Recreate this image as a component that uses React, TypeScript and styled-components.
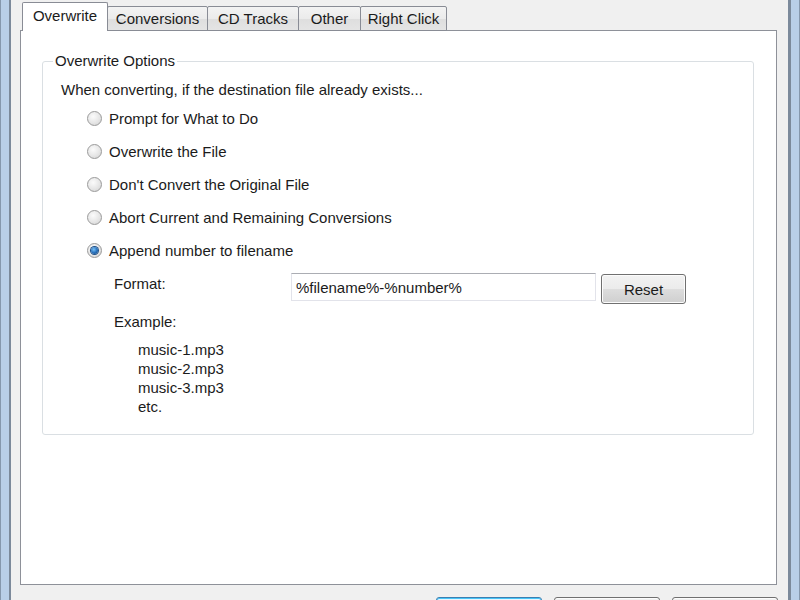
import React from "react";
import styled, { createGlobalStyle } from "styled-components";

const GlobalStyle = createGlobalStyle`
  html, body {
    margin: 0;
    padding: 0;
    overflow: hidden;
    background: #f0f0f0;
  }
  body {
    font-family: "Liberation Sans", Arial, sans-serif;
    font-size: 15px;
    color: #1b1b1b;
  }
`;

const tabs = [
  { label: "Overwrite", width: 86 },
  { label: "Conversions", width: 101 },
  { label: "CD Tracks", width: 92 },
  { label: "Other", width: 63 },
  { label: "Right Click", width: 87 },
];

const options = [
  "Prompt for What to Do",
  "Overwrite the File",
  "Don't Convert the Original File",
  "Abort Current and Remaining Conversions",
  "Append number to filename",
];

const examples = ["music-1.mp3", "music-2.mp3", "music-3.mp3", "etc."];

const App = () => {
  const active = 0;
  const checked = 4;

  return (
    <>
      <GlobalStyle />
      <Screen>
        <Frame side="left" />
        <Dialog>
          <TabStrip>
            {tabs.map((t, i) => (
              <Tab key={t.label} $active={i === active} $width={t.width}>
                {t.label}
              </Tab>
            ))}
          </TabStrip>
          <Panel>
            <Group>
              <Legend>Overwrite Options</Legend>
              <GroupBody>
                <Intro>When converting, if the destination file already exists...</Intro>
                <RadioList>
                  {options.map((o, i) => (
                    <RadioRow key={o}>
                      <Radio $checked={i === checked} />
                      <span>{o}</span>
                    </RadioRow>
                  ))}
                </RadioList>
                <FormatRow>
                  <FieldLabel>Format:</FieldLabel>
                  <TextBox>%filename%-%number%</TextBox>
                  <PushButton>Reset</PushButton>
                </FormatRow>
                <ExampleLabel>Example:</ExampleLabel>
                <ExampleList>
                  {examples.map((e) => (
                    <div key={e}>{e}</div>
                  ))}
                </ExampleList>
              </GroupBody>
            </Group>
          </Panel>
          {/* bottom buttons: only their top edges show in the picture */}
          <ButtonRow>
            <DialogButton $default />
            <DialogButton />
            <DialogButton />
          </ButtonRow>
        </Dialog>
        <Frame side="right" />
      </Screen>
    </>
  );
};

const Screen = styled.div`
  display: flex;
  width: 800px;
  height: 600px;
  overflow: hidden;
  background: #f0f0f0;
`;

const Frame = styled.div<{ side: "left" | "right" }>`
  width: ${(p) => (p.side === "left" ? "11px" : "12px")};
  flex-shrink: 0;
  box-sizing: border-box;
  background: #b9cfe8;
  ${(p) =>
    p.side === "left"
      ? `border-left: 1px solid #8698ad; border-right: 2px solid #7c8a9b;`
      : `border-left: 3px solid #7c8a9b; border-right: 1px solid #8698ad;`}
`;

const Dialog = styled.div`
  flex: 1;
  min-width: 0;
  display: flex;
  flex-direction: column;
  padding: 2px 11px 0 9px;
`;

const TabStrip = styled.div`
  display: flex;
  align-items: flex-end;
  height: 29px;
  flex-shrink: 0;
  padding-left: 2px;
  position: relative;
  z-index: 1;
  margin-bottom: -1px;
`;

const Tab = styled.div<{ $active?: boolean; $width: number }>`
  box-sizing: border-box;
  width: ${(p) => p.$width}px;
  height: ${(p) => (p.$active ? "29px" : "25px")};
  padding-bottom: ${(p) => (p.$active ? "3px" : "0")};
  margin-left: ${(p) => (p.$active ? "0" : "-1px")};
  display: flex;
  align-items: center;
  justify-content: center;
  border: 1px solid #898c95;
  border-bottom: ${(p) => (p.$active ? "none" : "1px solid #898c95")};
  border-radius: 2px 2px 0 0;
  background: ${(p) =>
    p.$active ? "#ffffff" : "linear-gradient(#f3f3f3 0%, #ebebeb 50%, #dedede 51%, #e4e4e4 100%)"};
  color: #1b1b1b;
  white-space: nowrap;
  &:first-child {
    margin-left: 0;
  }
`;

const Panel = styled.div`
  box-sizing: border-box;
  height: 555px;
  flex-shrink: 0;
  background: #ffffff;
  border: 1px solid #8e9199;
  padding: 21px 22px 0 21px;
`;

const Group = styled.fieldset`
  margin: 0;
  padding: 0 0 18px 0;
  border: 1px solid #dadfe3;
  border-radius: 3px;
`;

const Legend = styled.legend`
  margin-left: 10px;
  padding: 0 2px;
  line-height: 18px;
  color: #1b1b1b;
`;

const GroupBody = styled.div`
  padding: 10px 0 0 18px;
  line-height: 19px;
`;

const Intro = styled.div``;

const RadioList = styled.div`
  margin-top: 3px;
  padding-left: 26px;
`;

const RadioRow = styled.div`
  display: flex;
  align-items: center;
  gap: 7px;
  height: 33px;
`;

const Radio = styled.span<{ $checked?: boolean }>`
  box-sizing: border-box;
  width: 15px;
  height: 15px;
  border-radius: 50%;
  border: 1px solid #9a9a9a;
  background: radial-gradient(circle at 40% 35%, #fbfbfb 0%, #e6e6e6 55%, #cfcfcf 100%);
  display: flex;
  align-items: center;
  justify-content: center;
  flex-shrink: 0;
  &::after {
    content: "";
    display: ${(p) => (p.$checked ? "block" : "none")};
    width: 7px;
    height: 7px;
    border-radius: 50%;
    background: radial-gradient(circle at 40% 35%, #7cc3f5 0%, #2a74c0 50%, #0c3f7a 100%);
    box-shadow: 0 0 0 1px #1d4f86;
  }
`;

const FormatRow = styled.div`
  display: flex;
  align-items: flex-start;
  margin-top: 6px;
  padding-left: 53px;
`;

const FieldLabel = styled.div`
  width: 177px;
  padding-top: 1px;
`;

const TextBox = styled.div`
  box-sizing: border-box;
  width: 305px;
  height: 28px;
  border: 1px solid #e2e3ea;
  border-top-color: #abadb3;
  padding: 4px 4px;
  background: #fff;
  font-size: 15px;
`;

const PushButton = styled.div`
  box-sizing: border-box;
  width: 85px;
  height: 30px;
  margin: 1px 0 0 5px;
  border: 1px solid #707070;
  border-radius: 3px;
  background: linear-gradient(#f2f2f2 0%, #ebebeb 50%, #dddddd 51%, #cfcfcf 100%);
  box-shadow: inset 0 0 0 1px #fcfcfc;
  display: flex;
  align-items: center;
  justify-content: center;
`;

const ExampleLabel = styled.div`
  margin-top: 8px;
  padding-left: 53px;
`;

const ExampleList = styled.div`
  margin-top: 9px;
  padding-left: 77px;
`;

const ButtonRow = styled.div`
  display: flex;
  justify-content: flex-end;
  gap: 12px;
  margin-top: 12px;
  margin-right: -1px;
  flex-shrink: 0;
`;

const DialogButton = styled.div<{ $default?: boolean }>`
  box-sizing: border-box;
  width: 106px;
  height: 30px;
  border: 1px solid ${(p) => (p.$default ? "#3c7fb1" : "#707070")};
  border-radius: 3px;
  background: ${(p) =>
    p.$default
      ? "linear-gradient(#eaf6fd 0%, #d9f0fc 50%, #bee6fd 51%, #a7d9f5 100%)"
      : "linear-gradient(#f2f2f2 0%, #ebebeb 50%, #dddddd 51%, #cfcfcf 100%)"};
  box-shadow: inset 0 0 0 1px ${(p) => (p.$default ? "#48c5f8" : "#fcfcfc")};
`;

export default App;
